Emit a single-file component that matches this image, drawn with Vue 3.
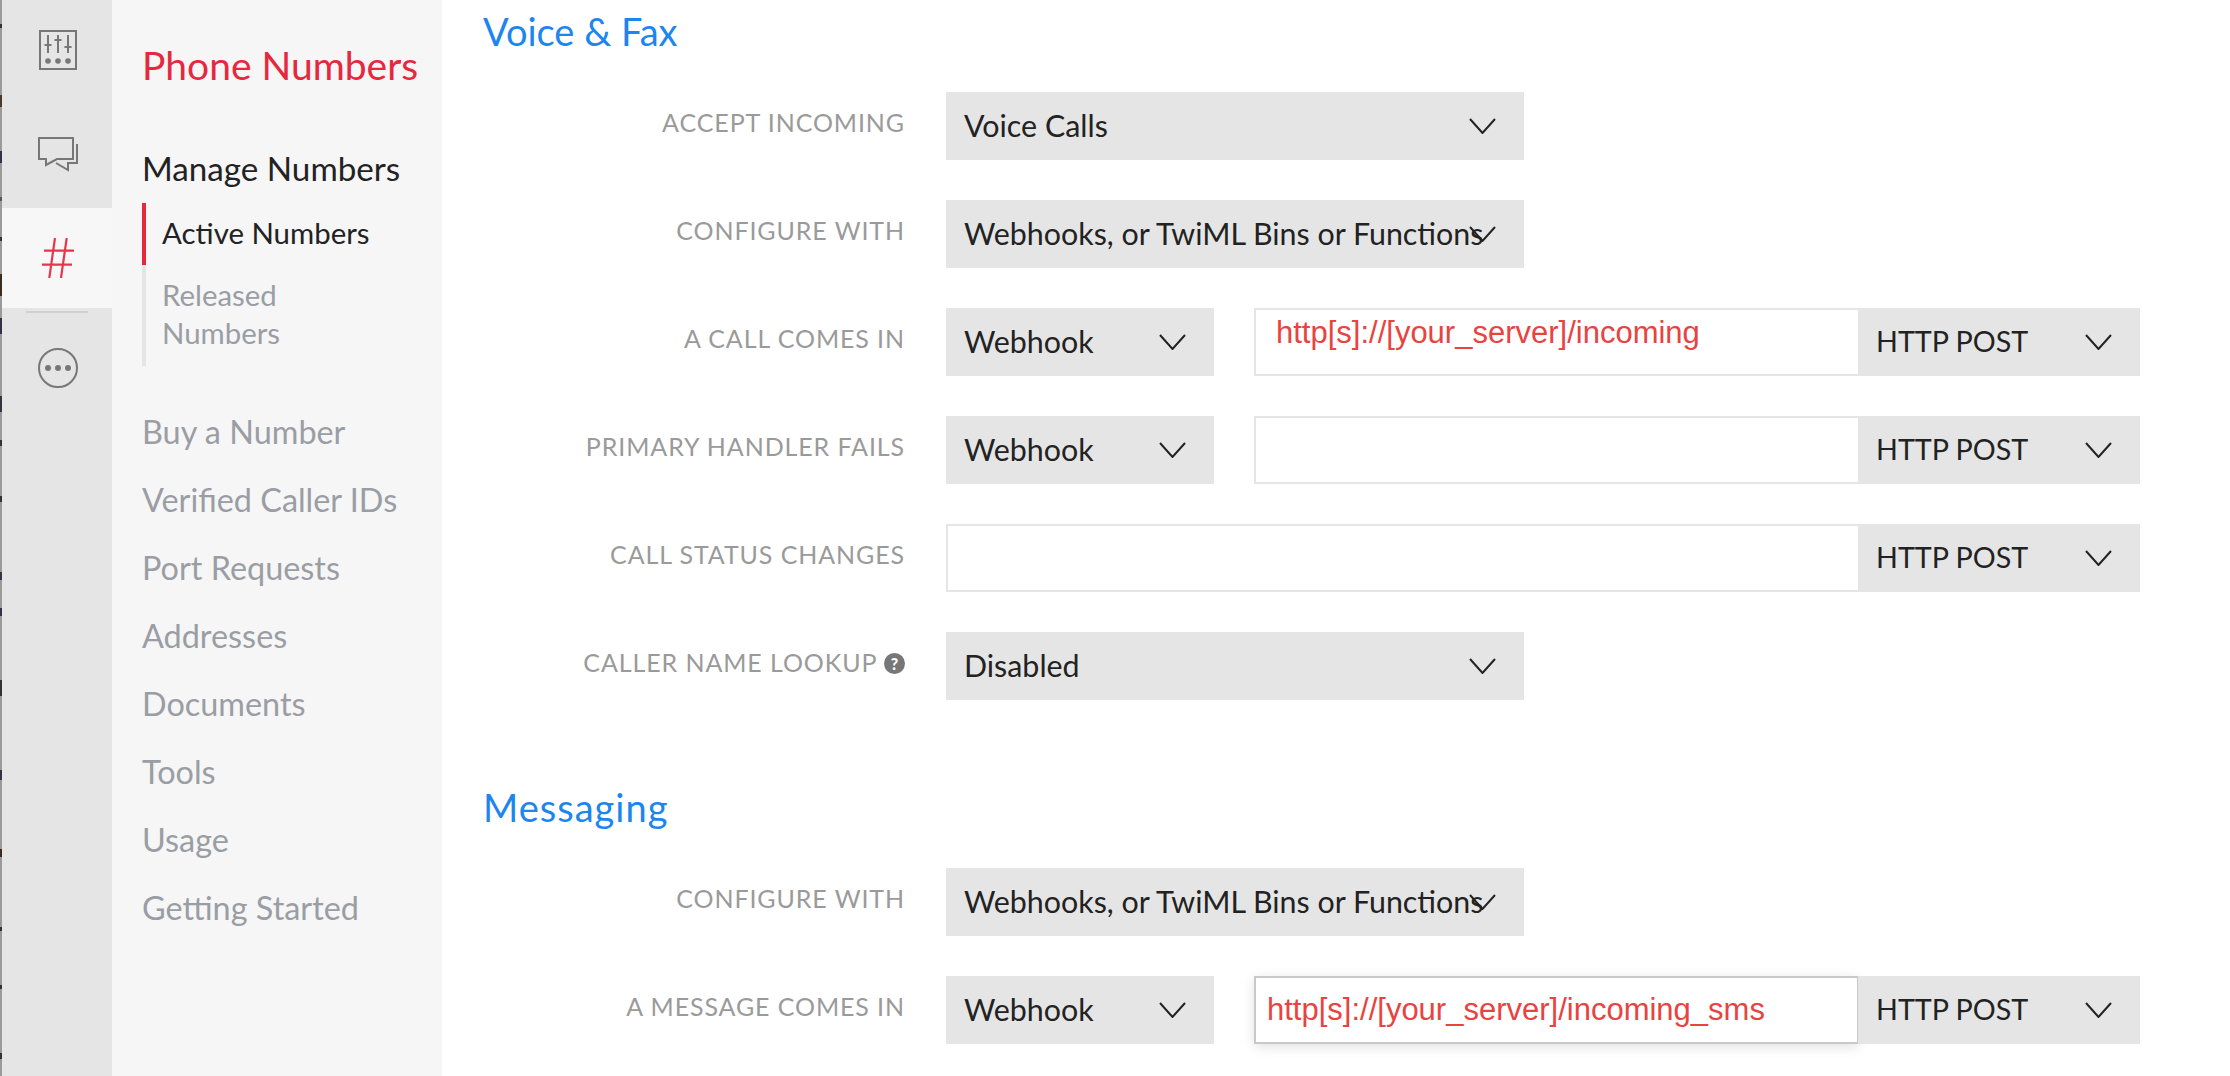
<script setup>
const nav = ['Buy a Number', 'Verified Caller IDs', 'Port Requests', 'Addresses', 'Documents', 'Tools', 'Usage', 'Getting Started']
</script>

<template>
  <div class="page">
    <aside class="rail">
      <div class="rail-item first">
        <svg width="38" height="40" viewBox="0 0 38 40" fill="none" stroke="#777" stroke-width="2">
          <rect x="1" y="1" width="36" height="38" />
          <path d="M9 5v18M19 5v18M29 5v18M5.500 15h7M15.500 10h7M25.500 17h7" />
          <circle cx="9" cy="31" r="2.800" fill="#777" stroke="none" />
          <circle cx="19" cy="31" r="2.800" fill="#777" stroke="none" />
          <circle cx="29" cy="31" r="2.800" fill="#777" stroke="none" />
        </svg>
      </div>
      <div class="rail-item second">
        <svg width="42" height="36" viewBox="0 0 42 36" fill="none" stroke="#777" stroke-width="2">
          <path d="M2 2h34v21H20l-11 6v-6H2z" />
          <path d="M40 8v19h-9v7l-12-7" />
        </svg>
      </div>
      <div class="rail-item active">
        <svg width="32" height="40" viewBox="0 0 32 40" fill="none" stroke="#e8344c" stroke-width="2.200">
          <path d="M13 0 7.300 40M24.700 0 19 40M2 12.700h30M0 26.700h30" />
        </svg>
      </div>
      <div class="rail-divider"></div>
      <div class="rail-item more">
        <svg width="40" height="40" viewBox="0 0 40 40" fill="none" stroke="#777" stroke-width="2">
          <circle cx="20" cy="20" r="19" />
          <circle cx="10" cy="20" r="3" fill="#777" stroke="none" />
          <circle cx="20" cy="20" r="3" fill="#777" stroke="none" />
          <circle cx="30" cy="20" r="3" fill="#777" stroke="none" />
        </svg>
      </div>
    </aside>

    <nav class="side">
      <h1 class="side-title">Phone Numbers</h1>
      <div class="side-head">Manage Numbers</div>
      <div class="sub">
        <div class="sub-item current">Active Numbers</div>
        <div class="sub-item">Released<br />Numbers</div>
      </div>
      <div class="side-links">
        <a v-for="n in nav" :key="n" class="side-link">{{ n }}</a>
      </div>
    </nav>

    <main class="main">
      <h2 class="section-title">Voice &amp; Fax</h2>
      <div class="rows">
        <div class="row">
          <div class="label">ACCEPT INCOMING</div>
          <div class="select wide"><span>Voice Calls</span><svg class="chev" viewBox="0 0 27 16"><path d="M1 1l12.500 14L26 1" /></svg></div>
        </div>
        <div class="row">
          <div class="label">CONFIGURE WITH</div>
          <div class="select wide"><span>Webhooks, or TwiML Bins or Functions</span><svg class="chev" viewBox="0 0 27 16"><path d="M1 1l12.500 14L26 1" /></svg></div>
        </div>
        <div class="row">
          <div class="label">A CALL COMES IN</div>
          <div class="select narrow"><span>Webhook</span><svg class="chev" viewBox="0 0 27 16"><path d="M1 1l12.500 14L26 1" /></svg></div>
          <div class="group offset">
            <div class="input top-text">http[s]://[your_server]/incoming</div>
            <div class="select method"><span>HTTP POST</span><svg class="chev" viewBox="0 0 27 16"><path d="M1 1l12.500 14L26 1" /></svg></div>
          </div>
        </div>
        <div class="row">
          <div class="label">PRIMARY HANDLER FAILS</div>
          <div class="select narrow"><span>Webhook</span><svg class="chev" viewBox="0 0 27 16"><path d="M1 1l12.500 14L26 1" /></svg></div>
          <div class="group offset">
            <div class="input"></div>
            <div class="select method"><span>HTTP POST</span><svg class="chev" viewBox="0 0 27 16"><path d="M1 1l12.500 14L26 1" /></svg></div>
          </div>
        </div>
        <div class="row">
          <div class="label">CALL STATUS CHANGES</div>
          <div class="group full">
            <div class="input"></div>
            <div class="select method"><span>HTTP POST</span><svg class="chev" viewBox="0 0 27 16"><path d="M1 1l12.500 14L26 1" /></svg></div>
          </div>
        </div>
        <div class="row">
          <div class="label">CALLER NAME LOOKUP <b class="help">?</b></div>
          <div class="select wide"><span>Disabled</span><svg class="chev" viewBox="0 0 27 16"><path d="M1 1l12.500 14L26 1" /></svg></div>
        </div>
      </div>

      <h2 class="section-title messaging">Messaging</h2>
      <div class="rows">
        <div class="row">
          <div class="label">CONFIGURE WITH</div>
          <div class="select wide"><span>Webhooks, or TwiML Bins or Functions</span><svg class="chev" viewBox="0 0 27 16"><path d="M1 1l12.500 14L26 1" /></svg></div>
        </div>
        <div class="row">
          <div class="label">A MESSAGE COMES IN</div>
          <div class="select narrow"><span>Webhook</span><svg class="chev" viewBox="0 0 27 16"><path d="M1 1l12.500 14L26 1" /></svg></div>
          <div class="group offset">
            <div class="input focused">http[s]://[your_server]/incoming_sms</div>
            <div class="select method"><span>HTTP POST</span><svg class="chev" viewBox="0 0 27 16"><path d="M1 1l12.500 14L26 1" /></svg></div>
          </div>
        </div>
      </div>
    </main>
  </div>
</template>

<style>
html, body { margin: 0; background: #fff; overflow: hidden; }
</style>

<style scoped>
.page {
  display: flex;
  width: 2230px;
  height: 1076px;
  overflow: hidden;
  font-family: Lato, "Open Sans", sans-serif;
  background: #fff;
}
.rail {
  width: 110px;
  flex: none;
  background: #e5e5e5;
  border-left: 2px solid #9a9a9a;
  border-image: linear-gradient(to bottom,
    #9a9a9a 25px, #333 25px, #333 29px, #9a9a9a 29px,
    #9a9a9a 96px, #4a3a2c 96px, #4a3a2c 108px, #9a9a9a 108px,
    #9a9a9a 152px, #334 152px, #334 164px, #9a9a9a 164px,
    #9a9a9a 198px, #556 198px, #556 202px, #9a9a9a 202px,
    #9a9a9a 238px, #333 238px, #333 242px, #9a9a9a 242px,
    #9a9a9a 274px, #3b2c20 274px, #3b2c20 296px, #9a9a9a 296px,
    #9a9a9a 318px, #334 318px, #334 334px, #9a9a9a 334px,
    #9a9a9a 396px, #334 396px, #334 412px, #9a9a9a 412px,
    #9a9a9a 440px, #333 440px, #333 446px, #9a9a9a 446px,
    #9a9a9a 496px, #333 496px, #333 502px, #9a9a9a 502px,
    #9a9a9a 572px, #334 572px, #334 580px, #9a9a9a 580px,
    #9a9a9a 608px, #334 608px, #334 616px, #9a9a9a 616px,
    #9a9a9a 680px, #333 680px, #333 696px, #9a9a9a 696px,
    #9a9a9a 770px, #334 770px, #334 780px, #9a9a9a 780px,
    #9a9a9a 848px, #3b2c20 848px, #3b2c20 856px, #9a9a9a 856px,
    #9a9a9a 926px, #333 926px, #333 930px, #9a9a9a 930px,
    #9a9a9a 984px, #333 984px, #333 988px, #9a9a9a 988px,
    #9a9a9a 1052px, #333 1052px, #333 1058px, #9a9a9a 1058px) 1;
}
.rail-item { display: flex; align-items: center; justify-content: center; padding-left: 2px; box-sizing: border-box; }
.first { height: 100px; }
.second { height: 108px; }
.active { height: 100px; background: #f7f7f7; }
.rail-divider { height: 2px; margin: 3px 24px 0; background: #cfcfcf; }
.more { height: 109px; }

.side {
  width: 330px;
  flex: none;
  background: #f6f6f6;
  box-sizing: border-box;
  padding: 41px 0 0 30px;
}
.side-title { margin: 0; font-size: 39px; line-height: 48px; font-weight: 400; color: #e6283f; }
.side-head { margin-top: 55px; font-size: 33.200px; line-height: 48px; color: #222; }
.sub { margin-top: 11px; border-left: 4px solid #e5e5e5; padding-bottom: 1px; }
.sub-item { margin-left: -4px; padding-left: 16px; font-size: 29.400px; line-height: 38px; color: #9a9ea4; border-left: 4px solid transparent; padding-top: 11px; padding-bottom: 13px; }
.sub-item.current { color: #222; border-left-color: #e6283f; }
.side-links { display: flex; flex-direction: column; margin-top: 32px; }
.side-link { font-size: 32.400px; line-height: 68px; color: #9a9ea4; }

.main { flex: 1; min-width: 0; padding: 0 0 0 42px; }
.section-title { margin: 0 0 0 -1px; font-size: 38px; line-height: 63px; font-weight: 400; color: #1c86ee; }
.rows { display: flex; flex-direction: column; gap: 40px; margin-top: 29px; }
.section-title.messaging { margin-top: 76px; letter-spacing: 1px; }
.row { display: flex; align-items: stretch; height: 68px; }
.label {
  width: 421px;
  margin-right: 41px;
  flex: none;
  text-align: right;
  font-size: 25px;
  line-height: 60px;
  letter-spacing: 0.900px;
  color: #9a9a9a;
  white-space: nowrap;
}
.help {
  display: inline-block;
  width: 21px;
  height: 21px;
  border-radius: 50%;
  background: #777;
  color: #fff;
  font-size: 16px;
  font-weight: 900;
  line-height: 21px;
  text-align: center;
  letter-spacing: 0;
  vertical-align: 2px;
}
.select {
  position: relative;
  box-sizing: border-box;
  background: #e5e5e5;
  color: #222;
  font-size: 30.400px;
  line-height: 66px;
  padding-left: 18px;
  white-space: nowrap;
  flex: none;
}
.wide { width: 578px; }
.narrow { width: 268px; }
.method { width: 282px; font-size: 28.700px; }
.chev {
  position: absolute;
  right: 28px;
  top: 26px;
  width: 27px;
  height: 16px;
  fill: none;
  stroke: #222;
  stroke-width: 2;
}
.group { display: flex; flex: none; }
.offset { margin-left: 40px; width: 886px; }
.full { width: 1194px; }
.input {
  flex: 1;
  min-width: 0;
  box-sizing: border-box;
  background: #fff;
  border: 2px solid #e5e5e5;
  border-right: 0;
  font-family: "Liberation Sans", Arial, sans-serif;
  font-size: 31px;
  color: #e8433f;
  white-space: nowrap;
}
.top-text { padding: 6px 0 0 20px; line-height: 34px; }
.focused {
  border: 2px solid #c8c8c8;
  line-height: 64px;
  padding-left: 11px;
  box-shadow: 0 3px 12px rgba(0, 0, 0, 0.12);
  position: relative;
  margin-right: -1px;
}
</style>
